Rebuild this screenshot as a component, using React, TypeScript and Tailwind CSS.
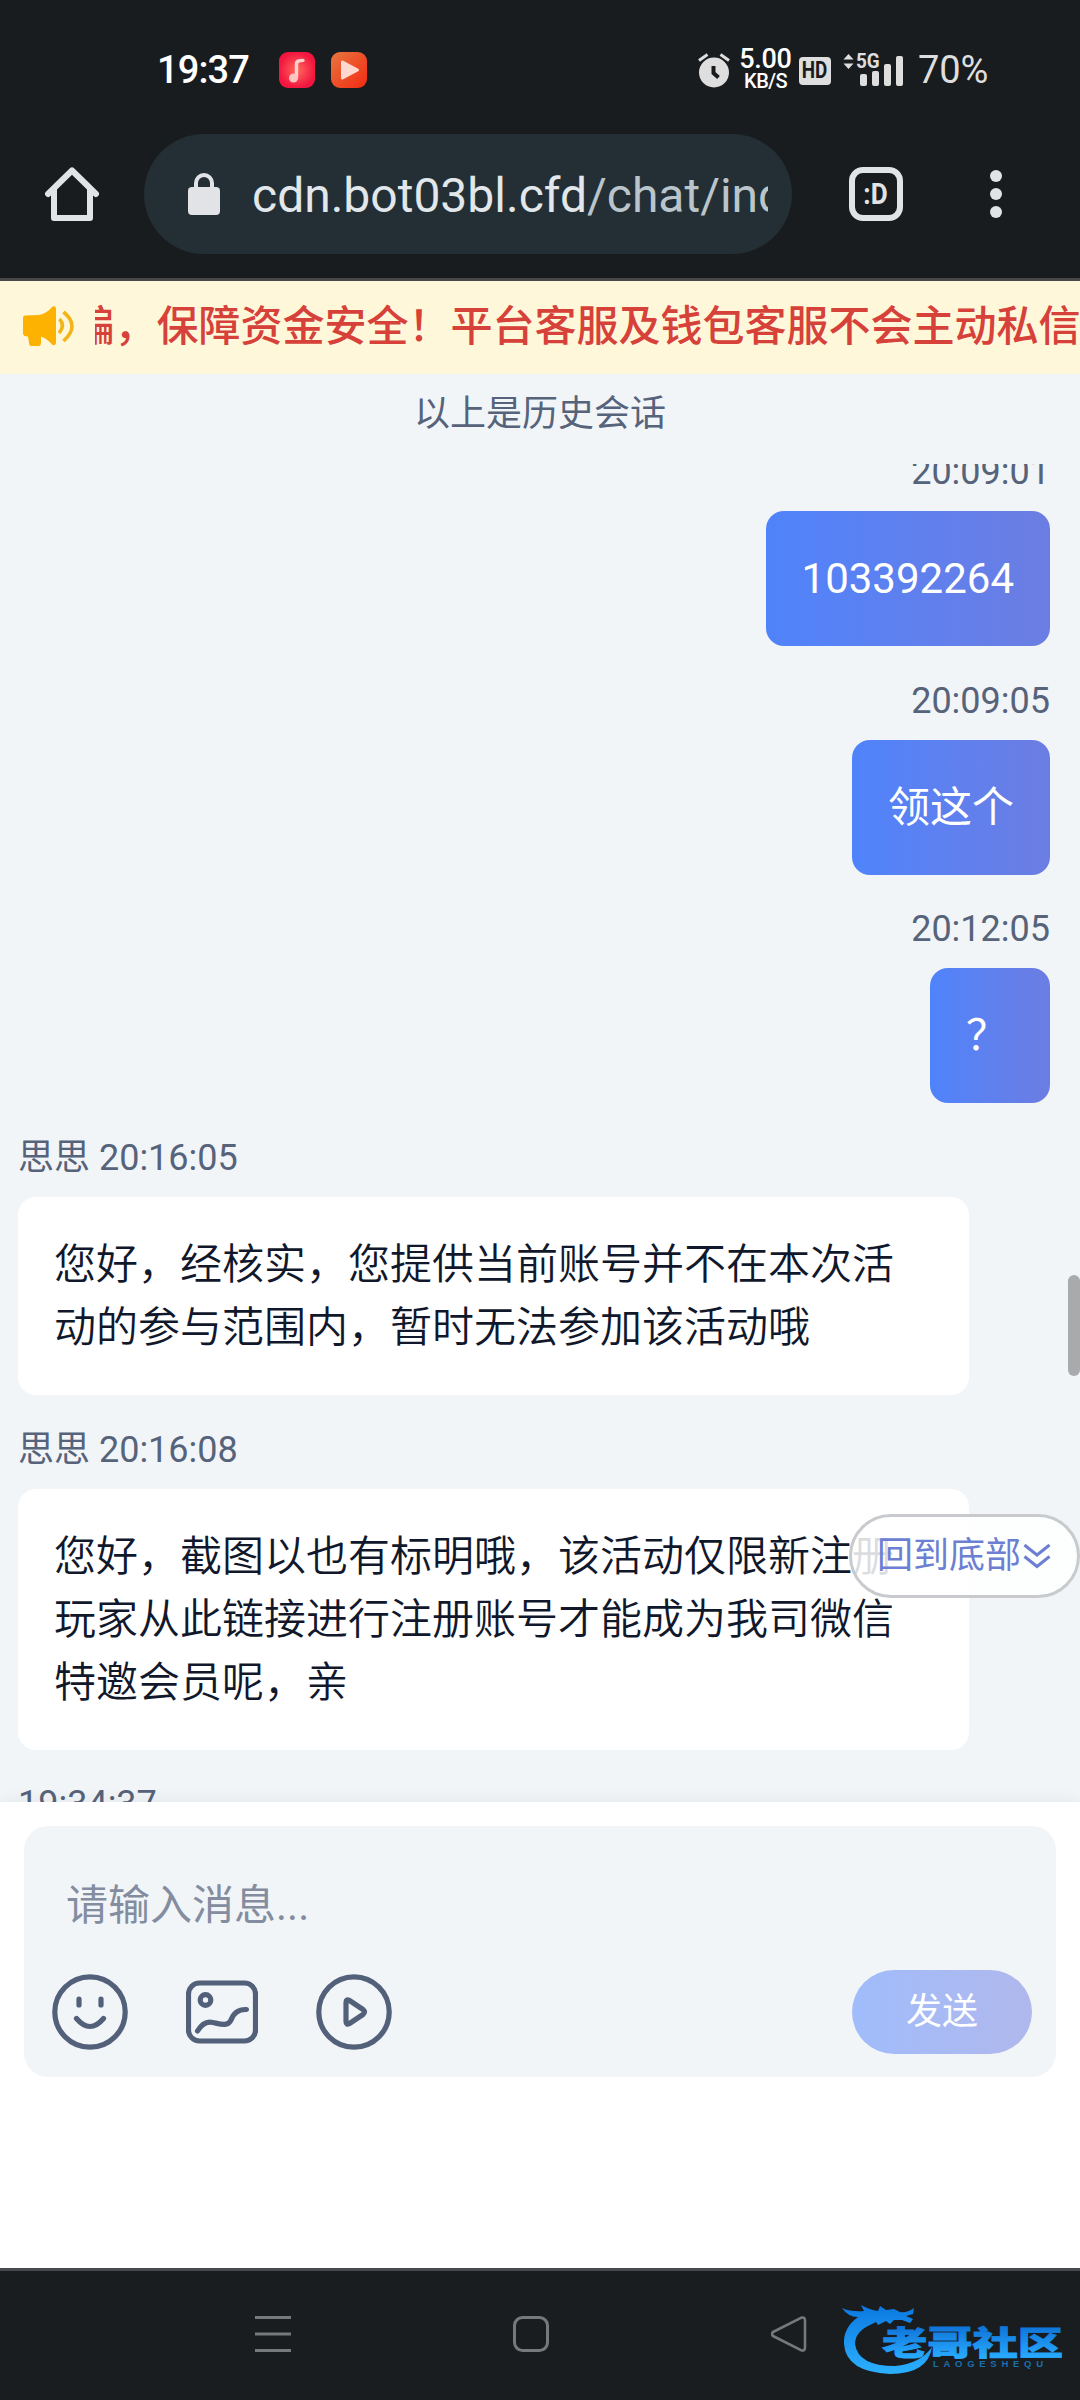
import { useState } from 'react';

type Message = {
  id: number;
  from: 'me' | 'agent';
  name?: string;
  time: string;
  text: string;
};

const MESSAGES: Message[] = [
  { id: 1, from: 'me', time: '20:09:01', text: '103392264' },
  { id: 2, from: 'me', time: '20:09:05', text: '领这个' },
  { id: 3, from: 'me', time: '20:12:05', text: '？' },
  { id: 4, from: 'agent', name: '思思', time: '20:16:05', text: '您好，经核实，您提供当前账号并不在本次活动的参与范围内，暂时无法参加该活动哦' },
  { id: 5, from: 'agent', name: '思思', time: '20:16:08', text: '您好，截图以也有标明哦，该活动仅限新注册玩家从此链接进行注册账号才能成为我司微信特邀会员呢，亲' },
  { id: 6, from: 'agent', time: '19:34:37', text: '' },
];

// ── Status bar ─────────────────────────────────────────────────
function StatusBar() {
  return (
    <div className="flex h-[134px] shrink-0 items-center pt-[6px] pl-[157px] text-white">
      <span className="w-[122px] text-[38px] leading-none font-medium tracking-[-0.9px]">19:37</span>

      <svg width="36" height="36" viewBox="0 0 36 36" className="shrink-0">
        <defs>
          <radialGradient id="music">
            <stop offset="0" stopColor="#ff6a5c" />
            <stop offset="1" stopColor="#f2153f" />
          </radialGradient>
        </defs>
        <rect width="36" height="36" rx="9" fill="url(#music)" />
        <path d="M17.500 26V12q0-3 3-3.200l3.500-.4" fill="none" stroke="#ffd0cc" strokeWidth="3.400" strokeLinecap="round" />
        <circle cx="14.500" cy="26" r="4.500" fill="#ffc3c0" />
      </svg>
      <svg width="36" height="36" viewBox="0 0 36 36" className="ml-4 shrink-0">
        <defs>
          <linearGradient id="video" x1="0" y1="0" x2="1" y2="1">
            <stop offset="0" stopColor="#e8763f" />
            <stop offset="1" stopColor="#f22a12" />
          </linearGradient>
        </defs>
        <rect width="36" height="36" rx="9" fill="url(#video)" />
        <path d="M11.500 10v16l15-8z" fill="#ffd9cf" stroke="#ffd9cf" strokeWidth="3" strokeLinejoin="round" />
      </svg>

      {/* Alarm */}
      <svg width="32" height="35" viewBox="0 0 32 35" className="ml-[331px] shrink-0">
        <circle cx="16" cy="19.500" r="15" fill="#dedede" />
        <path d="M1 7.500 9.500 1.500M31 7.500 22.500 1.500" stroke="#dedede" strokeWidth="3" />
        <path d="M15.500 13v7l5 4.500" fill="none" stroke="#191c1f" strokeWidth="4" />
      </svg>
      <div className="ml-[9px] flex w-[53px] shrink-0 flex-col items-center font-medium">
        <span className="text-[27px] leading-[21px] tracking-[-0.3px]">5.00</span>
        <span className="mt-[1px] text-[20px] leading-[20px] tracking-[-0.6px]">KB/S</span>
      </div>
      <div className="mt-[1px] ml-[7px] flex h-[28px] w-[32px] shrink-0 items-center justify-center rounded-[4px] bg-[#dedede]">
        <span className="scale-x-[0.82] text-[23px] leading-none font-bold text-[#191c1f]">HD</span>
      </div>

      {/* Network type sits over the two shortest bars */}
      <div className="relative ml-[12px] h-[36px] w-[61px] shrink-0 text-[#dedede]">
        <svg width="61" height="36" viewBox="0 0 61 36" fill="#dedede">
          <path d="M5.500 2 10.500 7.500H.5zM5.500 17 .5 11.500h10z" />
          <rect x="17" y="22" width="7" height="12" rx="2" />
          <rect x="29" y="19" width="7" height="15" rx="2" />
          <rect x="41" y="12" width="7" height="22" rx="2" />
          <rect x="53" y="4" width="7" height="30" rx="2" />
        </svg>
        <span className="absolute top-[-1px] left-[13px] origin-left scale-x-[0.9] text-[21px] leading-[20px] font-bold">5G</span>
      </div>
      <span className="ml-[14px] text-[38px] leading-none tracking-[-0.1px] text-[#dedede]">70%</span>
    </div>
  );
}

// ── Browser toolbar ────────────────────────────────────────────
function Toolbar() {
  return (
    <div className="flex h-[144px] shrink-0 items-center pb-[24px] pl-[45px]">
      <svg width="54" height="54" viewBox="0 0 54 54" fill="none" stroke="#e1e3e6" strokeWidth="6" strokeLinejoin="round" strokeLinecap="round">
        <path d="M3 27 27 3.500 51 27" />
        <path d="M9 22v29h36V22" />
      </svg>

      <div className="ml-[45px] flex h-[120px] w-[648px] items-center rounded-full bg-[#232f34] pl-[44px]">
        <svg width="32" height="42" viewBox="0 0 32 42" className="shrink-0">
          <rect y="14" width="32" height="28" rx="4" fill="#e1e3e6" />
          <path d="M8 16V10a8 8 0 0 1 16 0v6" fill="none" stroke="#e1e3e6" strokeWidth="4" />
        </svg>
        <div className="mt-[3px] ml-[31px] w-[517px] overflow-hidden pl-[1px] text-[48px] leading-[60px] whitespace-nowrap text-[#b9c5cb]">
          <span className="text-[#e1e7ea]">cdn.bot03bl.cfd</span>/chat/index
        </div>
      </div>

      <div className="ml-[57px] flex h-[54px] w-[54px] items-center justify-center rounded-[14px] border-6 border-[#e1e3e6]">
        <span className="scale-x-90 text-[29px] leading-none font-bold text-[#e1e3e6]">:D</span>
      </div>
      <div className="ml-[87px] flex flex-col gap-[6px]">
        <span className="h-3 w-3 rounded-full bg-[#e1e3e6]" />
        <span className="h-3 w-3 rounded-full bg-[#e1e3e6]" />
        <span className="h-3 w-3 rounded-full bg-[#e1e3e6]" />
      </div>
    </div>
  );
}

// ── Scrolling notice ───────────────────────────────────────────
function NoticeBar() {
  return (
    <div className="flex h-[93px] shrink-0 items-center bg-[#fff7d9] pl-[22px]">
      <svg width="53" height="41" viewBox="0 0 53 41" className="-mt-[4px] shrink-0">
        <path
          d="M3 10.500 17 10q8-1.500 13-8 3-2 4 1v35q-1 3.500-4 1.500-5-6-11-8v6q0 4-4 4h-4q-4 0-4-4l-1-6q-5 0-5-3V13q0-2.500 2-2.500z"
          fill="#fdb100"
        />
        <path d="M37.500 14q6 6.500-.5 14" fill="none" stroke="#f2b517" strokeWidth="3.600" />
        <path d="M41.500 7q17 14 0 29" fill="none" stroke="#f2b517" strokeWidth="3.600" />
      </svg>
      <div className="-mt-px ml-[20px] flex-1 overflow-hidden">
        <p className="-ml-[22.500px] text-[42px] leading-[60px] font-medium whitespace-nowrap text-[#d64139]">
          骗，保障资金安全！平台客服及钱包客服不会主动私信
        </p>
      </div>
    </div>
  );
}

// ── One message with its time line ─────────────────────────────
function MessageItem({ message }: { message: Message }) {
  const mine = message.from === 'me';
  return (
    <div className={mine ? 'mb-[27.700px] flex flex-col items-end' : 'mb-[27.700px] flex flex-col items-start'}>
      <div className="mb-3 h-[54px] text-[36px] leading-[55px] whitespace-pre text-[#56637a]">
        {message.name ? `${message.name} ` : ''}
        {message.time}
      </div>
      {message.text && (
        <div
          className={
            mine
              ? 'min-w-[120px] rounded-[18px] bg-linear-to-r from-[#4f83fb] to-[#6b7de2] p-9 text-[42px] leading-[63px] text-white'
              : 'w-[951px] rounded-[18px] bg-white p-9 text-[42px] leading-[63px] font-[350] text-[#11182b]'
          }
        >
          {message.text}
        </div>
      )}
    </div>
  );
}

// ── Input panel ────────────────────────────────────────────────
function Composer() {
  const [draft, setDraft] = useState('');
  return (
    <div className="relative h-[466px] shrink-0 bg-white px-[24px] pt-[24px] shadow-[0_0_15px_rgba(0,0,0,0.07)]">
      <div className="flex h-[251px] flex-col rounded-[24px] bg-[#f1f5f8] pt-[48px]">
        <input
          value={draft}
          onChange={e => setDraft(e.target.value)}
          placeholder="请输入消息..."
          className="h-[63px] w-full px-[42px] text-[42px] text-[#11182b] outline-none placeholder:text-[#848da0]"
        />
        <div className="mt-[33px] flex h-[84px] items-center pr-[24px] pl-[28px]">
          <svg width="76" height="76" viewBox="0 0 76 76" fill="none" stroke="#526079" strokeWidth="5.200" strokeLinecap="round">
            <circle cx="38" cy="38" r="35.200" />
            <path d="M27 25v6M49 25v6M24.500 44.500q13.500 16 27 0" />
          </svg>
          <svg width="72" height="64" viewBox="0 0 72 64" fill="none" stroke="#526079" strokeWidth="5.200" strokeLinecap="round" className="ml-[58px]">
            <rect x="2.500" y="3" width="67" height="58" rx="11" />
            <circle cx="19.500" cy="20" r="5.300" />
            <path d="M11.500 51Q18 40 27 42.500C34 44 42 47 45 40Q49 29 60.500 29.500" />
          </svg>
          <svg width="76" height="76" viewBox="0 0 76 76" fill="none" stroke="#526079" strokeWidth="5.200" strokeLinejoin="round" className="ml-[58px]">
            <circle cx="38" cy="38" r="35.200" />
            <path d="M30 28.500q0-4 3.500-2L47 35.500q3 2.500 0 5L33.500 49.500q-3.500 2-3.500-2z" />
          </svg>
          <button className="ml-auto h-[84px] w-[180px] rounded-full bg-linear-to-r from-[#a0bcfb] to-[#b0b8ec] text-[36px] text-white">
            发送
          </button>
        </div>
      </div>
    </div>
  );
}

// ── Watermark logo ─────────────────────────────────────────────
function CommunityLogo() {
  return (
    <svg width="226" height="80" viewBox="0 0 226 80">
      <defs>
        <linearGradient id="dragon" gradientUnits="userSpaceOnUse" x1="0" y1="5" x2="0" y2="74">
          <stop offset="0" stopColor="#0b78e0" />
          <stop offset="1" stopColor="#2cb0ff" />
        </linearGradient>
        <linearGradient id="word" gradientUnits="userSpaceOnUse" x1="0" y1="27" x2="0" y2="57">
          <stop offset="0" stopColor="#0f74d8" />
          <stop offset="1" stopColor="#27aaff" />
        </linearGradient>
      </defs>
      <path
        d="M2 8Q11 12 24 11L21 5Q30 10 38 11L40 6 46 10 54 9 60 12Q68 13 74 8L73 14 66 16 73 19 70 23 62 20 54 20 50 24 46 21 38 25 36 22 30 25Q15 32 15 44 18 66 55 66 80 64 92 47 88 74 50 74 6 72 4 44 3 28 18 17 8 17 2 8Z"
        fill="url(#dragon)"
      />
      <text
        x="42"
        y="55"
        textLength="181"
        lengthAdjust="spacingAndGlyphs"
        fontFamily="'Noto Sans CJK SC', sans-serif"
        fontSize="33"
        fontWeight="900"
        fill="url(#word)"
        stroke="url(#word)"
        strokeWidth="0.800"
      >
        老哥社区
      </text>
      <text x="93" y="67" textLength="110" fontFamily="'Liberation Sans', sans-serif" fontSize="9.500" fontWeight="700" fill="#1a6fae">
        LAOGESHEQU
      </text>
    </svg>
  );
}

function NavBar() {
  return (
    <div className="relative flex h-[132px] shrink-0 items-start border-t-[3px] border-[#47494e] bg-[#191d20] pt-[45px] pl-[255px]">
      <svg width="36" height="36" viewBox="0 0 36 36" stroke="#77787a" strokeWidth="3">
        <path d="M0 1.500h36M0 18h36M0 34.500h36" />
      </svg>
      <svg width="36" height="36" viewBox="0 0 36 36" fill="none" stroke="#77787a" strokeWidth="3" className="ml-[222px]">
        <rect x="1.500" y="1.500" width="33" height="33" rx="8" />
      </svg>
      <svg width="36" height="36" viewBox="0 0 36 36" fill="none" stroke="#77787a" strokeWidth="2.600" strokeLinejoin="round" className="ml-[222px]">
        <path d="M2 16 30 1.800q4-1.300 4 2.700v27q0 4-4 2.700L2 20q-2-2 0-4z" />
      </svg>
      <div className="absolute top-[29px] left-[840px]">
        <CommunityLogo />
      </div>
    </div>
  );
}

// ── Main App ───────────────────────────────────────────────────
export default function App() {
  return (
    <div className="flex h-[2400px] w-[1080px] flex-col overflow-hidden bg-[#f1f5f8] font-['Roboto','Noto_Sans_CJK_SC',sans-serif]">
      <header className="h-[281px] shrink-0 border-b-[3px] border-[#484848] bg-[#191c1f]">
        <StatusBar />
        <Toolbar />
      </header>
      <NoticeBar />

      <div className="flex h-[90px] shrink-0 justify-center text-[36px] leading-[80px] text-[#56637a]">以上是历史会话</div>

      <main className="relative h-[1338px] shrink-0 overflow-hidden">
        <div className="-mt-[19px] pr-[30px] pl-[18px]">
          {MESSAGES.map(m => (
            <MessageItem key={m.id} message={m} />
          ))}
        </div>

        {/* Scroll thumb */}
        <div className="absolute top-[811px] right-0 h-[101px] w-[12px] rounded-full bg-[#a9aaac]" />

        <button className="absolute top-[1050px] right-0 flex h-[84px] w-[231px] items-center rounded-full border-[3px] border-[#c8cacd] bg-white/85 pl-[25px] text-[36px] leading-none text-[#6c7fd2]">
          回到底部
          <svg width="28" height="26" viewBox="0 0 28 26" fill="none" stroke="#6c7fd2" strokeWidth="3" className="ml-[2px]">
            <path d="M1.500 2 14 12 26.500 2M1.500 13.500 14 23.500 26.500 13.500" />
          </svg>
        </button>
      </main>

      <Composer />
      <NavBar />
    </div>
  );
}
